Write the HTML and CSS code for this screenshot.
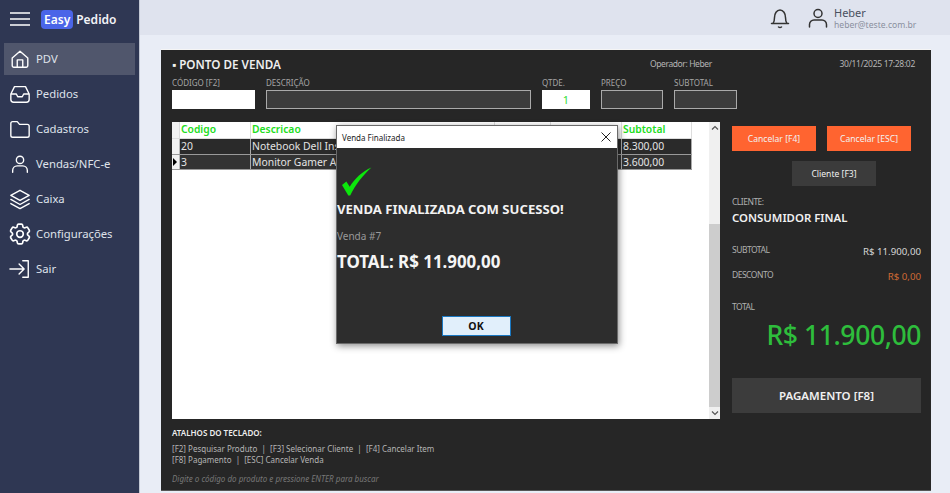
FILE: index.html
```html
<!DOCTYPE html>
<html lang="pt-BR">
<head>
<meta charset="utf-8">
<title>Easy Pedido - PDV</title>
<link rel="stylesheet" href="styles.css">
</head>
<body>
<div class="app">
  <aside class="sidebar">
    <div class="brand">
      <svg class="burger" viewBox="0 0 20 14" width="20" height="14"><path d="M0 1h20M0 7h20M0 13h20" stroke="#fff" stroke-width="1.3" fill="none"/></svg>
      <span class="logo-easy">Easy</span><span class="logo-pedido">Pedido</span>
    </div>
    <nav class="nav">
      <a class="nav-item active"><svg class="ico" viewBox="0 0 24 24"><path d="M3.500 11 12 3.500 20.500 11v8.200a1.800 1.800 0 0 1-1.800 1.800H5.300a1.800 1.800 0 0 1-1.800-1.800zM9 21v-8h6v8"/></svg><span>PDV</span></a>
      <a class="nav-item"><svg class="ico" viewBox="0 0 24 24"><path d="M6 4h12l4 8v6a3 3 0 0 1-3 3H5a3 3 0 0 1-3-3v-6zM2 12h6l1.500 3h5l1.500-3h6"/></svg><span>Pedidos</span></a>
      <a class="nav-item"><svg class="ico" viewBox="0 0 24 24"><path d="M2 6a2 2 0 0 1 2-2h5l2.500 3H20a2 2 0 0 1 2 2v10a2 2 0 0 1-2 2H4a2 2 0 0 1-2-2z"/></svg><span>Cadastros</span></a>
      <a class="nav-item"><svg class="ico" viewBox="0 0 24 24"><circle cx="12" cy="7.500" r="4"/><path d="M4 21v-2a5 5 0 0 1 5-5h6a5 5 0 0 1 5 5v2"/></svg><span>Vendas/NFC-e</span></a>
      <a class="nav-item"><svg class="ico" viewBox="0 0 24 24"><path d="M12 2.500 22 8l-10 5.500L2 8zM2 12.500 12 18l10-5.500M2 17l10 5.500L22 17"/></svg><span>Caixa</span></a>
      <a class="nav-item"><svg class="ico" viewBox="2 2 20 20"><path d="M9.594 3.940c.09-.542.56-.94 1.110-.94h2.593c.55 0 1.020.398 1.110.94l.213 1.281c.063.374.313.686.645.870.074.04.147.083.22.127.325.196.72.257 1.075.124l1.217-.456a1.125 1.125 0 0 1 1.370.49l1.296 2.247a1.125 1.125 0 0 1-.26 1.431l-1.003.827c-.293.241-.438.613-.43.992a7.723 7.723 0 0 1 0 .255c-.008.378.137.75.43.991l1.004.827c.424.35.534.955.26 1.430l-1.298 2.247a1.125 1.125 0 0 1-1.369.491l-1.217-.456c-.355-.133-.75-.072-1.076.124a6.470 6.470 0 0 1-.22.128c-.331.183-.581.495-.644.869l-.213 1.281c-.09.543-.56.94-1.110.94h-2.594c-.55 0-1.019-.398-1.110-.94l-.213-1.281c-.062-.374-.312-.686-.644-.87a6.520 6.520 0 0 1-.22-.127c-.325-.196-.72-.257-1.076-.124l-1.217.456a1.125 1.125 0 0 1-1.369-.49l-1.297-2.247a1.125 1.125 0 0 1 .26-1.431l1.004-.827c.292-.24.437-.613.43-.991a6.932 6.932 0 0 1 0-.255c.007-.38-.138-.751-.43-.992l-1.004-.827a1.125 1.125 0 0 1-.26-1.430l1.297-2.247a1.125 1.125 0 0 1 1.370-.491l1.216.456c.356.133.751.072 1.076-.124.072-.044.146-.086.22-.128.332-.183.582-.495.644-.869l.214-1.280Z"/><circle cx="12" cy="12" r="3"/></svg><span>Configurações</span></a>
      <a class="nav-item"><svg class="ico" viewBox="0 0 24 24"><path d="M1 12h15M11 6.500 16.500 12 11 17.500M15 3h6v18h-6"/></svg><span>Sair</span></a>
    </nav>
  </aside>

  <div class="content">
    <header class="topbar">
      <svg class="bell" viewBox="0 0 24 24" width="24" height="24"><path d="M5 17.500c1.200-1.500 1.500-3 1.500-6 0-4 2.200-7.500 5.500-7.500s5.500 3.500 5.500 7.500c0 3 .3 4.500 1.500 6zM3.500 17.500h17M10.500 21c1 .8 2 .8 3 0"/></svg>
      <svg class="user" viewBox="0 0 24 24" width="24" height="24"><circle cx="12" cy="7.500" r="4"/><path d="M3.500 21v-2.500a4.500 4.500 0 0 1 4.500-4.500h8a4.500 4.500 0 0 1 4.500 4.500V21"/></svg>
      <div class="user-info">
        <div class="user-name">Heber</div>
        <div class="user-mail">heber@teste.com.br</div>
      </div>
    </header>

    <main class="main">
      <section class="window">
        <div class="win-head">
          <h1 class="win-title">▪ PONTO DE VENDA</h1>
          <span class="operator">Operador: Heber</span>
          <span class="clock">30/11/2025 17:28:02</span>
        </div>

        <div class="fields">
          <label class="field f-code">CÓDIGO [F2]<span class="box white"></span></label>
          <label class="field f-desc">DESCRIÇÃO<span class="box dark"></span></label>
          <label class="field f-qty">QTDE.<span class="box white qty">1</span></label>
          <label class="field f-price">PREÇO<span class="box dark"></span></label>
          <label class="field f-sub">SUBTOTAL<span class="box dark"></span></label>
        </div>

        <div class="body">
          <div class="left">
            <div class="grid-wrap">
              <div class="grid">
                <div class="grow head"><span class="rh"></span><span class="c1">Codigo</span><span class="c2">Descricao</span><span class="c3"></span><span class="c4"></span><span class="c5">Subtotal</span></div>
                <div class="grow r1"><span class="rh"></span><span class="c1">20</span><span class="c2">Notebook Dell Inspiron</span><span class="c3"></span><span class="c4"></span><span class="c5">8.300,00</span></div>
                <div class="grow r2"><span class="rh"><i class="arrow"></i></span><span class="c1">3</span><span class="c2">Monitor Gamer AOC</span><span class="c3"></span><span class="c4"></span><span class="c5">3.600,00</span></div>
              </div>
              <div class="scrollbar">
                <svg viewBox="0 0 8 6" width="8" height="6"><path d="M1 4.500 4 1.500l3 3" stroke="#555" stroke-width="1.200" fill="none"/></svg>
                <div class="track"></div>
                <div class="thumb"></div>
                <svg viewBox="0 0 8 6" width="8" height="6"><path d="M1 1.500 4 4.500l3-3" stroke="#555" stroke-width="1.200" fill="none"/></svg>
              </div>
            </div>
            <div class="shortcuts">
              <div class="sc-title">ATALHOS DO TECLADO:</div>
              <div class="sc-line">[F2] Pesquisar Produto &nbsp;|&nbsp; [F3] Selecionar Cliente &nbsp;|&nbsp; [F4] Cancelar Item</div>
              <div class="sc-line">[F8] Pagamento &nbsp;|&nbsp; [ESC] Cancelar Venda</div>
              <div class="sc-hint">Digite o código do produto e pressione ENTER para buscar</div>
            </div>
          </div>

          <div class="right">
            <div class="btn-row">
              <button class="btn orange">Cancelar [F4]</button>
              <button class="btn orange">Cancelar [ESC]</button>
            </div>
            <div class="btn-center"><button class="btn gray">Cliente [F3]</button></div>
            <div class="lbl lbl-client">CLIENTE:</div>
            <div class="client">CONSUMIDOR FINAL</div>
            <div class="sum sum-sub"><span class="lbl">SUBTOTAL</span><span class="val">R$ 11.900,00</span></div>
            <div class="sum sum-disc"><span class="lbl">DESCONTO</span><span class="val disc">R$ 0,00</span></div>
            <div class="lbl lbl-total">TOTAL</div>
            <div class="total">R$ 11.900,00</div>
            <button class="pay">PAGAMENTO [F8]</button>
          </div>
        </div>
      </section>
    </main>
  </div>
</div>

<div class="dialog">
  <div class="dlg-title"><span>Venda Finalizada</span><svg viewBox="0 0 10 10" width="10" height="10"><path d="M.5.500l9 9M9.500.500l-9 9" stroke="#222" stroke-width="1" fill="none"/></svg></div>
  <div class="dlg-body">
    <svg class="check" viewBox="0 0 32 30" width="31" height="29"><path d="M1 18.500 5.500 15l3.500 5.500C14 12 22 4.500 31.500 .5 23 8 15 18 9.500 29.500H7.500z" fill="#0ce60c"/></svg>
    <div class="dlg-msg">VENDA FINALIZADA COM SUCESSO!</div>
    <div class="dlg-sale">Venda #7</div>
    <div class="dlg-total">TOTAL: R$ 11.900,00</div>
    <div class="dlg-actions"><button class="ok">OK</button></div>
  </div>
</div>
</body>
</html>
```

FILE: styles.css
```css
* { box-sizing: border-box; }
html, body { margin: 0; padding: 0; height: 100%; overflow: hidden; }
body { font-family: "Noto Sans", "Open Sans", sans-serif; background: #e9edf6; color: #ddd; }
.app { display: flex; width: 950px; height: 493px; }

.sidebar { width: 140px; flex: none; background: #2f3753; border-right: 1px solid #c3c8d4; }
.brand { display: flex; align-items: center; height: 38px; padding-left: 10px; }
.burger { margin-right: 11px; }
.logo-easy { background: #4a65e8; color: #fff; font-size: 12px; font-weight: 600; line-height: 19px; padding: 0 3px; border-radius: 4px; margin-right: 3px; }
.logo-pedido { color: #f2f3f7; font-size: 12px; font-weight: 600; }
.nav { display: flex; flex-direction: column; padding: 5px 4px 0; gap: 3px; }
.nav-item { display: flex; align-items: center; height: 32px; padding-left: 5px; color: #dfe2ea; font-size: 11.300px; line-height: 16px; }
.nav-item.active { background: #50566c; }
.nav-item span { margin-left: 5px; }
.ico { width: 22px; height: 22px; flex: none; fill: none; stroke: #fff; stroke-width: 1.500; stroke-linejoin: round; stroke-linecap: round; }

.content { flex: 1; min-width: 0; display: flex; flex-direction: column; }
.topbar { height: 35px; flex: none; background: #dfe3ee; display: flex; align-items: center; padding-left: 628px; color: #333; }
.bell, .user { fill: none; stroke: #333; stroke-width: 1.500; stroke-linejoin: round; stroke-linecap: round; }
.user { margin-left: 14px; }
.user-info { margin-left: 4px; padding-top: 3px; }
.user-name { font-size: 11px; line-height: 13px; color: #4a5060; }
.user-mail { font-size: 8.600px; line-height: 13px; color: #8a909e; }

.main { flex: 1; padding: 14px 19px 2px 21px; min-height: 0; }
.window { width: 770px; height: 442px; background: #262626; border-top: 1px solid #f5f5f5; border-bottom: 1px solid #555; padding: 0 10px 0 11px; }

.win-head { display: flex; align-items: center; height: 25px; padding-top: 2px; }
.win-title { margin: 0; font-size: 11.700px; font-weight: 600; color: #eee; width: 478px; }
.operator { font-size: 8.500px; letter-spacing: -.4px; color: #b5b5b5; width: 164px; }
.clock { font-size: 8.500px; letter-spacing: -.3px; color: #b5b5b5; width: 101px; text-align: right; white-space: nowrap; }

.fields { display: flex; gap: 11px; height: 32px; margin-top: 2px; }
.field { display: flex; flex-direction: column; justify-content: space-between; font-size: 8px; line-height: 12px; color: #a5a5a5; }
.f-code { width: 83px; }
.f-desc { width: 265px; }
.f-qty { width: 48px; }
.f-price { width: 62px; }
.f-sub { width: 63px; }
.box { display: block; height: 19px; }
.box.white { background: #fff; }
.box.dark { background: #3c3c3c; border: 1.500px solid #aaa; }
.box.qty { color: #33dd33; font-size: 11px; line-height: 19px; text-align: center; }

.body { display: flex; margin-top: 13px; }
.left { width: 548px; flex: none; }
.grid-wrap { height: 297px; background: #fff; display: flex; justify-content: space-between; }
.grid { width: 520px; font-size: 10.400px; line-height: 15px; }
.grow { display: grid; grid-template-columns: 8px 71px 244px 56px 71px 70px; height: 15.500px; background: #2a2a2a; color: #e4e4e4; border-bottom: 1px solid #999; }
.grow.head { background: #fff; height: 17px; color: #22dd22; font-weight: 600; font-size: 10.300px; border-bottom: 1px solid #ddd; }
.grow.r2 { background: #333; }
.grow .rh { background: #f2f2f2; display: flex; align-items: center; padding-left: 1px; border-right: 1px solid #bbb; }
.grow span { padding-left: 1px; overflow: hidden; white-space: nowrap; border-right: 1px solid #aaa; }
.grow.head span { border-right-color: #ddd; }
.arrow { width: 0; height: 0; border-left: 4px solid #000; border-top: 4px solid transparent; border-bottom: 4px solid transparent; display: block; }
.scrollbar { width: 11px; background: #f0f0f0; display: flex; flex-direction: column; align-items: center; padding: 3px 0; }
.track { height: 93px; flex: none; }
.thumb { width: 11px; flex: 1; background: #cdcdcd; margin-bottom: 3px; }

.shortcuts { margin-top: 9px; font-size: 8px; line-height: 10.500px; color: #b5b5b5; }
.sc-title { color: #eee; font-weight: 600; margin-bottom: 5px; height: 11px; font-size: 8px; }
.sc-hint { margin-top: 9px; font-style: italic; color: #777; }

.right { width: 189px; margin-left: 12px; flex: none; padding-top: 4px; }
.btn-row { display: flex; justify-content: space-between; width: 179px; }
.btn { width: 84px; height: 25px; border: 0; padding: 0; font: 8.600px "Noto Sans", sans-serif; color: #f2f2f2; }
.btn.orange { background: #ff6430; }
.btn.gray { background: #3b3b3b; }
.btn-center { width: 204px; display: flex; justify-content: center; margin-top: 10px; }
.lbl { font-size: 8.500px; letter-spacing: -.5px; line-height: 12px; color: #b0b0b0; }
.lbl-client { margin-top: 10px; }
.client { font-size: 11.400px; font-weight: 600; color: #f0f0f0; line-height: 15px; margin-top: 2px; }
.sum { display: flex; justify-content: space-between; }
.sum .lbl { margin-top: 1px; }
.sum .val { font-size: 9.700px; color: #d8d8d8; line-height: 14px; margin-top: 2px; }
.sum .val.disc { color: #d06a35; }
.sum-sub { margin-top: 18px; }
.sum-disc { margin-top: 9px; }
.lbl-total { margin-top: 17px; }
.total { text-align: right; font-size: 26.500px; letter-spacing: -.4px; line-height: 34px; font-weight: 500; color: #2ebd3c; margin-top: 5px; }
.pay { display: block; width: 189px; height: 35px; margin-top: 26px; border: 0; background: #3c3c3c; color: #f0f0f0; font: 600 11.500px "Noto Sans", sans-serif; }

.dialog { position: absolute; left: 337px; top: 126px; width: 280px; height: 217px; background: #2d2d2d; box-shadow: 0 0 0 1px #6a6a6a, 1px 2px 7px 1px rgba(0,0,0,.45); }
.dlg-title { height: 22px; background: #fff; display: flex; align-items: center; justify-content: space-between; padding: 0 6px 0 5px; color: #222; font-size: 8px; }
.dlg-body { display: flex; flex-direction: column; }
.check { display: block; margin: 19px 0 0 4px; flex: none; }
.dlg-msg { font-size: 13.100px; font-weight: 700; color: #f2f2f2; line-height: 17px; margin-top: 5px; white-space: nowrap; }
.dlg-sale { font-size: 10px; line-height: 14px; color: #999; margin-top: 11px; }
.dlg-total { font-size: 16.900px; font-weight: 700; color: #f5f5f5; line-height: 20px; margin-top: 9px; white-space: nowrap; }
.dlg-actions { display: flex; justify-content: center; margin-top: 44px; padding-right: 2px; }
.ok { width: 69px; height: 20px; background: #e1effb; border: 1px solid #1a78c2; padding: 0; font: 700 10.500px "Noto Sans", sans-serif; color: #111; }
```
